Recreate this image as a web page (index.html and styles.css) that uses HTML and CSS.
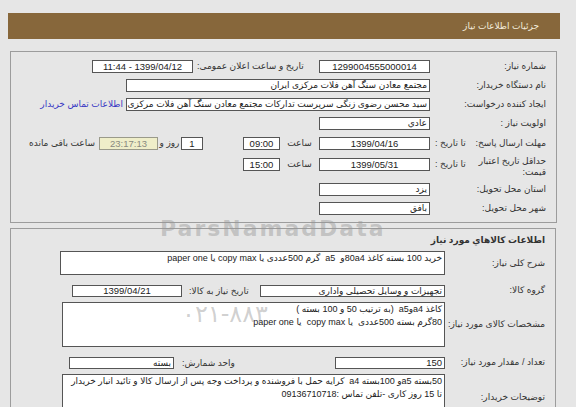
FILE: index.html
```html
<!DOCTYPE html>
<html lang="fa" dir="rtl">
<head>
<meta charset="utf-8">
<title>جزئیات اطلاعات نیاز</title>
<link rel="stylesheet" href="styles.css">
</head>
<body>
<div class="page">
  <div class="titlebar">جزئیات اطلاعات نیاز</div>

  <div class="panel p1">
    <div class="row r19">
      <div class="lbl">شماره نیاز:</div>
      <div class="box w111 c">1299004555000014</div>
      <div class="lbl2 w126">تاریخ و ساعت اعلان عمومی:</div>
      <div class="box w101 c">1399/04/12 - 11:44</div>
    </div>
    <div class="row r19">
      <div class="lbl">نام دستگاه خریدار:</div>
      <div class="box w304">مجتمع معادن سنگ آهن فلات مرکزی ایران</div>
    </div>
    <div class="row r19">
      <div class="lbl">ایجاد کننده درخواست:</div>
      <div class="box w304">سید محسن رضوی زنگی سرپرست تدارکات مجتمع معادن سنگ آهن فلات مرکزی</div>
      <a class="link" href="#">اطلاعات تماس خریدار</a>
    </div>
    <div class="row r20">
      <div class="lbl">اولویت نیاز :</div>
      <div class="box w111">عادي</div>
    </div>
    <div class="row r21">
      <div class="lbl split"><span>مهلت ارسال پاسخ:</span><span class="sub">تا تاریخ :</span></div>
      <div class="box w111 c">1399/04/16</div>
      <div class="mid w39">ساعت</div>
      <div class="box w37 c">09:00</div>
      <div class="box w22 c ml">1</div>
      <div class="mid w23">روز و</div>
      <div class="box w59 c timer">23:17:13</div>
      <div class="rest">ساعت باقی مانده</div>
    </div>
    <div class="row r25">
      <div class="lbl split"><span class="two">حداقل تاریخ اعتبار<br>قیمت:</span><span class="sub">تا تاریخ :</span></div>
      <div class="box w111 c">1399/05/31</div>
      <div class="mid w39">ساعت</div>
      <div class="box w37 c">15:00</div>
    </div>
    <div class="row r19">
      <div class="lbl">استان محل تحویل:</div>
      <div class="box w111">یزد</div>
    </div>
    <div class="row">
      <div class="lbl">شهر محل تحویل:</div>
      <div class="box w111">بافق</div>
    </div>
  </div>

  <div class="panel p2">
    <div class="head">اطلاعات کالاهاي مورد نیاز</div>
    <div class="row2 mb9">
      <div class="lbl b">شرح کلی نیاز:</div>
      <div class="box area w385 h24">خرید 100 بسته کاغذ 80a4و&nbsp; a5&nbsp; گرم 500عددی یا copy max یا paper one</div>
    </div>
    <div class="row2 mb5">
      <div class="lbl b">گروه کالا:</div>
      <div class="box w185 h12">تجهیزات و وسایل تحصیلی واداری</div>
      <div class="lbl2 w78">تاریخ نیاز به کالا:</div>
      <div class="box w110 h12 c">1399/04/21</div>
    </div>
    <div class="row2 mb9">
      <div class="lbl b">مشخصات کالای مورد نیاز:</div>
      <div class="box area w383 h45">کاغذ a4وa5&nbsp; (به ترتیب 50 و 100 بسته )<br>80گرم بسته 500عددی&nbsp; یا copy max&nbsp; یا paper one</div>
    </div>
    <div class="row2 mb5">
      <div class="lbl b">تعداد / مقدار مورد نیاز:</div>
      <div class="box w110 h12 num">150</div>
      <div class="lbl2 w161">واحد شمارش:</div>
      <div class="box w105 h12">بسته</div>
    </div>
    <div class="row2">
      <div class="lbl b">توضیحات خریدار:</div>
      <div class="box area w383 h46 tight">50بسته a5و 100بسته a4&nbsp; کرایه حمل با فروشنده و پرداخت وجه پس از ارسال کالا و تائید انبار خریدار<br>تا 15 روز کاری -تلفن تماس :09136710718</div>
    </div>
  </div>

  <div class="wm wm1" dir="ltr">ParsNamadData</div>
  <div class="wm wm2" dir="ltr">۰۲۱-۸۸۳</div>
</div>
</body>
</html>
```
FILE: styles.css
```css
html, body {
  margin: 0;
  padding: 0;
}
body {
  background: #e6e6e6;
  font-family: "Liberation Sans", "DejaVu Sans", sans-serif;
  font-size: 9px;
  color: #333;
  direction: rtl;
}
.page {
  position: relative;
  width: 576px;
  height: 407px;
  overflow: hidden;
  padding-top: 13px;
  box-sizing: border-box;
}
.titlebar {
  margin: 0 16px 0 8px;
  height: 26px;
  line-height: 26px;
  background: #87673b;
  color: #f3ecdc;
  padding-right: 21px;
}
.panel {
  border: 1px solid #9c9c9c;
}
.p1 {
  margin: 12px 19px 0 10px;
  padding: 8px 10px 7px 0;
}
.p2 {
  margin: 5px 20px 0 10px;
  padding: 0 10px 0 0;
}
.row {
  display: flex;
  align-items: flex-start;
  line-height: 13px;
}
.r19 { height: 19px; }
.r20 { height: 20px; }
.r21 { height: 21px; }
.r25 { height: 25px; }
.lbl {
  width: 116px;
  flex: none;
  line-height: 13px;
  white-space: nowrap;
}
.lbl.split {
  display: flex;
}
.lbl.split .sub {
  margin-right: auto;
  padding-left: 5px;
}
.two {
  line-height: 11px;
  margin-top: -2px;
}
.lbl.b {
  width: 100px;
}
.lbl2 {
  flex: none;
  text-align: left;
  padding-left: 4px;
  box-sizing: border-box;
  white-space: nowrap;
}
.box {
  flex: none;
  height: 13px;
  box-sizing: border-box;
  border: 1px solid #555;
  background: #fff;
  line-height: 11px;
  padding: 0 2px;
  white-space: nowrap;
  overflow: hidden;
  color: #222;
}
.c, .num { font-size: 9.5px; }
.c { text-align: center; }
.w22 { width: 22px; }
.w23 { width: 23px; }
.w37 { width: 37px; }
.w39 { width: 39px; }
.w59 { width: 59px; }
.w78 { width: 78px; padding-left: 7px; }
.w101 { width: 101px; }
.w105 { width: 105px; }
.w110 { width: 110px; }
.w111 { width: 111px; }
.w126 { width: 126px; }
.w161 { width: 161px; padding-left: 8px; }
.w185 { width: 185px; }
.w304 { width: 304px; }
.w383 { width: 383px; }
.w385 { width: 385px; }
.h12 { height: 12px; line-height: 10px; }
.h24 { height: 24px; }
.h45 { height: 45px; }
.h46 { height: 46px; }
.area {
  white-space: normal;
  line-height: 13px;
  padding: 0 2px;
}
.tight {
  white-space: nowrap;
  letter-spacing: -0.1px;
}
.ml { margin-right: 40px; }
.mid {
  flex: none;
  text-align: center;
  white-space: nowrap;
}
.timer {
  background: #efeec9;
  border-color: #9a9a8a;
  color: #8a8a80;
}
.rest {
  padding-right: 4px;
  white-space: nowrap;
}
.link {
  margin-right: 3px;
  color: #3838c4;
  text-decoration: none;
  white-space: nowrap;
}
.head {
  height: 22px;
  line-height: 22px;
  font-weight: bold;
  color: #333;
}
.row2 {
  display: flex;
  align-items: center;
}
.mb5 { margin-bottom: 5px; }
.mb9 { margin-bottom: 9px; }
.wm {
  position: absolute;
  pointer-events: none;
  font-family: "DejaVu Sans", sans-serif;
  font-weight: bold;
  color: rgba(150, 150, 150, 0.45);
  white-space: nowrap;
}
.wm1 {
  left: 160px;
  top: 216px;
  font-size: 22px;
  letter-spacing: 2px;
}
.wm2 {
  left: 182px;
  top: 300px;
  font-size: 24px;
  font-weight: normal;
}
```
